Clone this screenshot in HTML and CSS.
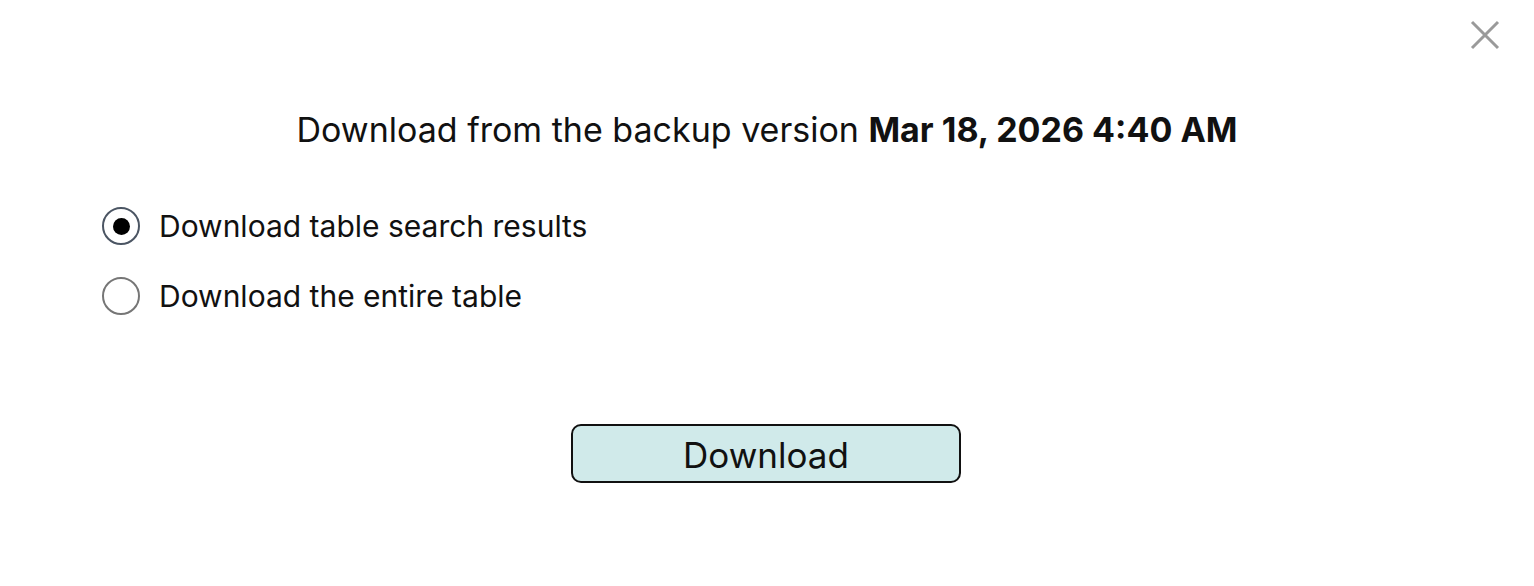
FILE: index.html
```html
<!DOCTYPE html>
<html>
<head>
<meta charset="utf-8">
<link rel="stylesheet" href="styles.css">
</head>
<body>
<div class="dialog">
  <button class="close" aria-label="Close">
    <svg width="30" height="30" viewBox="0 0 30 30"><path d="M2 2 L28 28 M28 2 L2 28" stroke="#9a9a9a" stroke-width="3" stroke-linecap="butt"/></svg>
  </button>
  <h1 class="title">Download from the backup version <b>Mar 18, 2026 4:40 AM</b></h1>
  <div class="options">
    <label class="option"><span class="radio checked"><span class="dot"></span></span>Download table search results</label>
    <label class="option"><span class="radio"></span>Download the entire table</label>
  </div>
  <div class="actions">
    <button class="download">Download</button>
  </div>
</div>
</body>
</html>
```
FILE: styles.css
```css
html, body {
  margin: 0;
  padding: 0;
  background: #ffffff;
}
body {
  font-family: Inter, "Noto Sans", "Liberation Sans", sans-serif;
  color: #111;
}
.dialog {
  position: relative;
  width: 1534px;
  height: 586px;
  box-sizing: border-box;
  padding-top: 106px;
}
.close {
  position: absolute;
  top: 20px;
  right: 34px;
  width: 30px;
  height: 30px;
  padding: 0;
  border: 0;
  background: none;
}
.close svg { display: block; }
.title {
  margin: 0;
  text-align: center;
  font-size: 34px;
  font-weight: 400;
  line-height: 48px;
  letter-spacing: 0;
}
.title b { font-weight: 700; }
.options {
  display: flex;
  flex-direction: column;
  gap: 32px;
  padding-left: 102px;
  margin-top: 53px;
}
.option {
  display: flex;
  align-items: center;
  gap: 19px;
  font-size: 30px;
  line-height: 38px;
  height: 38px;
}
.radio {
  width: 38px;
  height: 38px;
  box-sizing: border-box;
  border: 2px solid #767676;
  border-radius: 50%;
  display: flex;
  align-items: center;
  justify-content: center;
  flex: none;
}
.radio.checked { border-color: #4b5563; }
.dot {
  width: 17px;
  height: 17px;
  border-radius: 50%;
  background: #000;
}
.actions {
  display: flex;
  justify-content: center;
  margin-top: 109px;
  padding-right: 2px;
}
.download {
  width: 390px;
  height: 59px;
  box-sizing: border-box;
  background: #d0eaea;
  border: 2px solid #111;
  border-radius: 10px;
  font-family: Inter, "Noto Sans", "Liberation Sans", sans-serif;
  font-size: 35px;
  color: #111;
  padding: 2px 0 0;
}
```
